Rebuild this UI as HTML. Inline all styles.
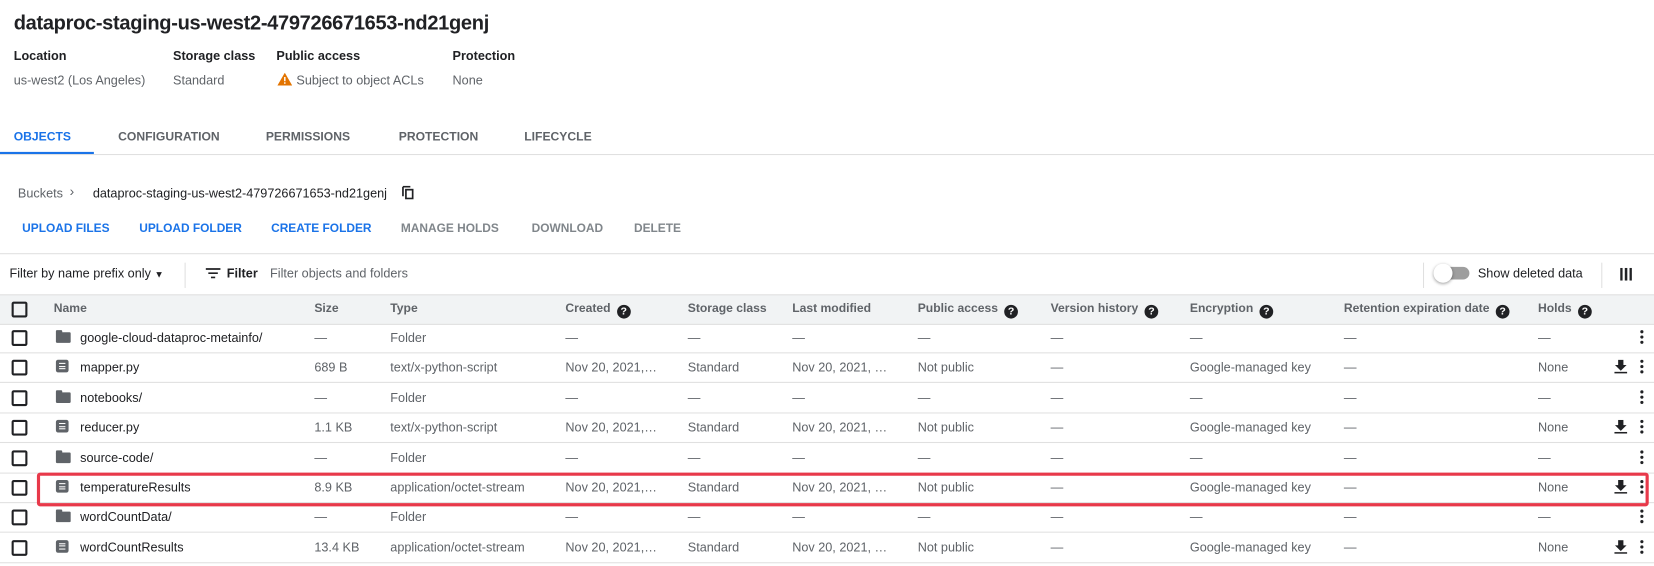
<!DOCTYPE html>
<html><head><meta charset="utf-8"><style>
html,body{margin:0;padding:0;background:#fff;overflow:hidden;width:1654px;height:566px}
#w{position:absolute;left:0;top:0;width:1568px;height:537px;transform:scale(1.05485);transform-origin:0 0;font-family:"Liberation Sans",Arial,sans-serif;color:#202124}
.a{position:absolute;white-space:nowrap}
.t{font-size:19px;font-weight:bold;left:13px;top:12px;letter-spacing:-0.3px}
.lb{font-size:12px;font-weight:bold;top:46px}
.vl{font-size:12px;color:#5f6368;top:69px}
.tab{font-size:11.5px;font-weight:bold;color:#5f6368;top:124px}
.btn{font-size:11.3px;font-weight:bold;top:211px;color:#1a73e8}
.btn.g{color:#80868b}
.hl{position:absolute;left:0;width:1568px;height:1px;background:#e0e0e0}
.cb{position:absolute;left:11px;width:11px;height:11px;border:2px solid #202124;border-radius:2px}
.c{font-size:12px;position:absolute;white-space:nowrap}
.h{color:#5f6368;font-weight:bold;font-size:11.5px}
.q{display:inline-block;width:13px;height:13px;border-radius:50%;background:#202124;color:#fff;font-size:10px;text-align:center;line-height:13px;font-weight:bold;vertical-align:-2px;margin-left:6px}
.fo{position:absolute;left:53px;width:14px;height:10px;background:#5f6368;border-radius:1px}
.fo:before{content:"";position:absolute;left:0;top:-2px;width:6px;height:3px;background:#5f6368;border-radius:1px 1px 0 0}
.fi{position:absolute;left:53px;width:12px;height:12px;background:#5f6368;border-radius:2px}
.fi i{position:absolute;left:3px;width:6px;height:1px;background:#fff}
.dots{position:absolute;left:1555px;width:3px}
.dots i{display:block;width:3px;height:3px;background:#202124;border-radius:50%;margin-bottom:2px}
.dl{position:absolute;left:1530px}
</style></head><body><div id="w">
<div class="a t">dataproc-staging-us-west2-479726671653-nd21genj</div>
<div class="a lb" style="left:13px">Location</div>
<div class="a lb" style="left:164px">Storage class</div>
<div class="a lb" style="left:262px">Public access</div>
<div class="a lb" style="left:429px">Protection</div>
<div class="a vl" style="left:13px">us-west2 (Los Angeles)</div>
<div class="a vl" style="left:164px">Standard</div>
<div class="a vl" style="left:263px"><svg width="14" height="12" viewBox="0 0 14 12" style="vertical-align:-1px;margin-right:4px"><path d="M7 0L14 12H0Z" fill="#e37400"/><rect x="6.3" y="4" width="1.4" height="4" fill="#fff"/><rect x="6.3" y="9" width="1.4" height="1.4" fill="#fff"/></svg>Subject to object ACLs</div>
<div class="a vl" style="left:429px">None</div>

<div class="a tab" style="left:13px;color:#1a73e8">OBJECTS</div>
<div class="a tab" style="left:112px">CONFIGURATION</div>
<div class="a tab" style="left:252px">PERMISSIONS</div>
<div class="a tab" style="left:378px">PROTECTION</div>
<div class="a tab" style="left:497px">LIFECYCLE</div>
<div class="hl" style="top:146px"></div>
<div style="position:absolute;left:0;top:144px;width:89px;height:2px;background:#1a73e8"></div>

<div class="a" style="left:17px;top:176px;font-size:12px;color:#5f6368">Buckets</div>
<div class="a" style="left:66px;top:174px;font-size:13px;color:#5f6368">›</div>
<div class="a" style="left:88px;top:176px;font-size:12px">dataproc-staging-us-west2-479726671653-nd21genj</div>
<svg class="a" style="left:381px;top:176px" width="12" height="13" viewBox="0 0 12 13"><path d="M1 1h7M1 1v9" stroke="#202124" stroke-width="1.6" fill="none"/><rect x="3.8" y="3.8" width="6.4" height="8.4" stroke="#202124" stroke-width="1.6" fill="none"/></svg>

<div class="a btn" style="left:21px">UPLOAD FILES</div>
<div class="a btn" style="left:132px">UPLOAD FOLDER</div>
<div class="a btn" style="left:257px">CREATE FOLDER</div>
<div class="a btn g" style="left:380px">MANAGE HOLDS</div>
<div class="a btn g" style="left:504px">DOWNLOAD</div>
<div class="a btn g" style="left:601px">DELETE</div>

<div class="hl" style="top:240px"></div>
<div class="a" style="left:9px;top:252px;font-size:12px">Filter by name prefix only <span style="font-size:9px">▼</span></div>
<div style="position:absolute;left:175px;top:249px;width:1px;height:24px;background:#e0e0e0"></div>
<svg class="a" style="left:195px;top:254px" width="14" height="10"><path d="M0 1h14M2.5 5h9M5 9h4" stroke="#202124" stroke-width="1.6"/></svg>
<div class="a" style="left:215px;top:252px;font-size:12px;font-weight:bold">Filter</div>
<div class="a" style="left:256px;top:252px;font-size:12px;color:#5f6368">Filter objects and folders</div>
<div style="position:absolute;left:1349px;top:249px;width:1px;height:24px;background:#e0e0e0"></div>
<div style="position:absolute;left:1364px;top:253px;width:29px;height:12px;border-radius:6px;background:#9e9e9e"></div>
<div style="position:absolute;left:1359px;top:250px;width:18px;height:18px;border-radius:50%;background:#fff;box-shadow:0 1px 3px rgba(0,0,0,.4)"></div>
<div class="a" style="left:1401px;top:252px;font-size:12px">Show deleted data</div>
<div style="position:absolute;left:1518px;top:249px;width:1px;height:24px;background:#e0e0e0"></div>
<svg class="a" style="left:1536px;top:254px" width="11" height="12"><path d="M1 0v12M5.5 0v12M10 0v12" stroke="#202124" stroke-width="2.4"/></svg>

<div style="position:absolute;left:0;top:279px;width:1568px;height:27px;background:#f1f3f4;border-top:1px solid #e0e0e0;border-bottom:1px solid #e0e0e0"></div>
<div class="cb" style="top:286px"></div>
<div class="c h" style="left:51px;top:287px">Name</div>
<div class="c h" style="left:298px;top:287px">Size</div>
<div class="c h" style="left:370px;top:287px">Type</div>
<div class="c h" style="left:536px;top:287px">Created<span class="q">?</span></div>
<div class="c h" style="left:652px;top:287px">Storage class</div>
<div class="c h" style="left:751px;top:287px">Last modified</div>
<div class="c h" style="left:870px;top:287px">Public access<span class="q">?</span></div>
<div class="c h" style="left:996px;top:287px">Version history<span class="q">?</span></div>
<div class="c h" style="left:1128px;top:287px">Encryption<span class="q">?</span></div>
<div class="c h" style="left:1274px;top:287px">Retention expiration date<span class="q">?</span></div>
<div class="c h" style="left:1458px;top:287px">Holds<span class="q">?</span></div>

<div id="rows"></div>
<script>
var R=[["f","google-cloud-dataproc-metainfo/"],["p","mapper.py","689 B","text/x-python-script"],["f","notebooks/"],["p","reducer.py","1.1 KB","text/x-python-script"],["f","source-code/"],["p","temperatureResults","8.9 KB","application/octet-stream"],["f","wordCountData/"],["p","wordCountResults","13.4 KB","application/octet-stream"]];
var h="";
R.forEach(function(r,i){var y=306+i*28.4,ty=y+7,f=r[0]=="f";
h+='<div class="hl" style="top:'+(y+28)+'px"></div>';
h+='<div class="cb" style="top:'+(y+7)+'px"></div>';
h+=f?'<div class="fo" style="top:'+(y+9)+'px"></div>':'<div class="fi" style="top:'+(y+7)+'px"><i style="top:3px"></i><i style="top:5.5px"></i><i style="top:8px"></i></div>';
h+='<div class="c" style="left:76px;top:'+ty+'px">'+r[1]+'</div>';
var d="—",g="color:#5f6368;";
var cols=f?[[298,d],[370,"Folder"],[536,d],[652,d],[751,d],[870,d],[996,d],[1128,d],[1274,d],[1458,d]]:[[298,r[2]],[370,r[3]],[536,"Nov 20, 2021,…"],[652,"Standard"],[751,"Nov 20, 2021, …"],[870,"Not public"],[996,d],[1128,"Google-managed key"],[1274,d],[1458,"None"]];
cols.forEach(function(c){h+='<div class="c" style="'+g+'left:'+c[0]+'px;top:'+ty+'px">'+c[1]+'</div>';});
if(!f)h+='<svg class="dl" style="top:'+(y+7)+'px" width="13" height="13"><path d="M4 0h5v5h3l-5.5 5.5L1 5h3z" fill="#202124"/><rect x="0.5" y="11.5" width="12" height="1.6" fill="#202124"/></svg>';
h+='<div class="dots" style="top:'+(y+7)+'px"><i></i><i></i><i></i></div>';
});
h+='<div style="position:absolute;left:35px;top:448px;width:1522px;height:26px;border:3px solid #e8394a;border-radius:3px"></div>';
document.getElementById("rows").innerHTML=h;
</script>
</div></body></html>
